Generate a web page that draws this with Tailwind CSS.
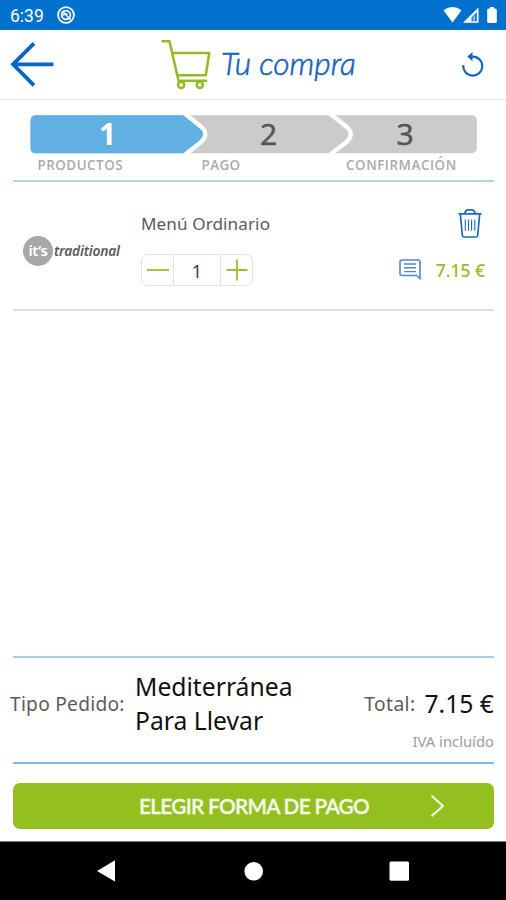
<!DOCTYPE html>
<html lang="es">
<head>
<meta charset="utf-8">
<title>Tu compra</title>
<script src="https://cdn.jsdelivr.net/npm/@tailwindcss/browser@4"></script>
</head>
<body class="bg-white">
<div class="w-[506px] h-[900px] flex flex-col overflow-hidden bg-white whitespace-nowrap font-['Noto_Sans',sans-serif]">
  <!-- Status bar -->
  <div class="h-[30px] shrink-0 bg-[#0072ce] flex items-center text-white pl-[10px] pr-[8px]">
    <span class="font-['Roboto',sans-serif] text-[17.5px] leading-[30px] w-[47px] pt-[2px]">6:39</span>
    <svg class="w-[18px] h-[18px]" viewBox="0 0 18 18" fill="none" stroke="white"><circle cx="9" cy="9" r="7.9" stroke-width="1.8"/><circle cx="9" cy="9" r="4.4" stroke-width="1.7"/><path d="M5 5L13.5 13.5M5.8 9.5Q8 7 10.5 8.2" stroke-width="1.6"/></svg>
    <svg class="ml-auto w-[56px] h-[20px]" viewBox="442 5 56 20" fill="white"><path d="M443.5 10.2Q452.5 3.6 461.5 10.2L452.5 22.5Z"/><path fill-rule="evenodd" d="M463 22.8L478.5 7.5V22.8ZM471.5 17.2V21.2H476.8V12.2Z"/><path d="M472.7 17.2L475.2 14.5V21.2H472.7Z" opacity=".5"/><path d="M488.8 8.5H490.3V7H494V8.5H495.2Q496.8 8.5 496.8 10V21.5Q496.8 23 495.2 23H488.8Q487.2 23 487.2 21.5V10Q487.2 8.5 488.8 8.5Z"/></svg>
  </div>
  <!-- Header -->
  <div class="h-[70px] shrink-0 border-b-[1.5px] border-[#dedede] flex items-center pl-[10px] pr-[21px]">
    <svg class="w-[45px] h-[46px] mt-[-2px]" viewBox="10.5 41 45 46" fill="none" stroke="#0867c4" stroke-width="3.8"><path d="M34.5 43.3L13.5 64.3L34.5 85.3M13.5 64.3H54"/></svg>
    <svg class="ml-[106px] mt-[-1px] w-[51px] h-[52px]" viewBox="161 38 51 52" fill="none" stroke="#93bb22" stroke-width="2.5" stroke-linecap="round" stroke-linejoin="round"><path d="M162.6 41.2H169.5L178.5 80.8H206.2M172.3 53H209.3L205.8 75.3H177.3"/><circle cx="181.2" cy="84.8" r="3.1"/><circle cx="199.8" cy="84.8" r="3.1"/></svg>
    <span class="ml-[9px] mt-[-4px] font-['Lato',sans-serif] italic font-light text-[31.7px] leading-[40px] text-[#1862bd] w-[137px] [-webkit-text-stroke:0.6px_#1862bd]">Tu compra</span>
    <svg class="ml-auto mt-[-2px] w-[24px] h-[26px]" viewBox="461 51 24 26" fill="none" stroke="#1464c0" stroke-width="2.1"><path d="M463.3 65.2A9.5 9.5 0 1 0 472.8 56.6H469"/><path d="M472.5 52V61.2L467.3 56.6Z" fill="#1464c0" stroke="none"/></svg>
  </div>
  <!-- Steps -->
  <div class="h-[80px] shrink-0 pt-[15px] pl-[30px]">
    <div class="grid w-[448px] h-[39px]">
      <svg class="col-start-1 row-start-1 w-[448px] h-[39px]" viewBox="30 115 448 39">
        <rect x="30.5" y="115.3" width="446.3" height="38" rx="5" fill="#cbcbcb"/>
        <path d="M36 115.3H182Q186 115.3 189 117.5L199 126Q209 134.3 199 142.8L189 151.3Q186 153.3 182 153.3H36Q30.5 153.3 30.5 148V121Q30.5 115.3 36 115.3Z" fill="#62afe3"/>
        <path d="M184 113L200.5 126.2Q210 134.3 200.5 142.5L184 155.5" fill="none" stroke="white" stroke-width="4.3"/>
        <path d="M329 113L346 126.2Q355.5 134.3 346 142.5L329 155.5" fill="none" stroke="white" stroke-width="4.3"/>
      </svg>
      <div class="col-start-1 row-start-1 flex font-['Open_Sans',sans-serif] text-[30px] leading-[38px] text-[#555] font-medium text-center">
        <span class="w-[155px] text-white font-bold">1</span><span class="w-[167px] [-webkit-text-stroke:0.6px_#555]">2</span><span class="w-[106px] [-webkit-text-stroke:0.6px_#555]">3</span>
      </div>
    </div>
    <div class="flex font-['Open_Sans',sans-serif] font-semibold text-[13.4px] leading-[23px] text-[#ababab] pl-[7.5px]">
      <span class="w-[164px] tracking-[0.5px]">PRODUCTOS</span><span class="w-[144.5px] tracking-[0.4px]">PAGO</span><span class="tracking-[0.55px]">CONFIRMACIÓN</span>
    </div>
  </div>
  <div class="mx-[13px] mr-[12px] h-[2px] shrink-0 bg-[#b0d0ec]"></div>
  <!-- Cart item -->
  <div class="ml-[13px] mr-[12px] h-[129px] shrink-0 border-b-2 border-[#dedede] flex pt-[24px] pl-[10px] pr-[9px]">
    <div class="w-[117px] h-[32px] mt-[29px] flex items-center">
      <div class="size-[30px] rounded-full bg-[#a8a8a8] text-white text-center text-[15px] leading-[28px] font-semibold tracking-[-0.4px]">it’s</div>
      <span class="ml-[1px] italic font-semibold text-[13.8px] tracking-[-0.2px] text-[#5c5c5c]">traditional</span>
    </div>
    <div class="flex flex-col pl-[1px]">
      <span class="text-[17.1px] leading-[36px] text-[#5a5a5a] tracking-[0.1px]">Menú Ordinario</span>
      <div class="mt-[12px] w-[112px] h-[32px] border-[1.5px] border-[#e2e2e2] rounded-[7px] flex">
        <div class="w-[31px] grid place-items-center"><svg class="w-[22px] h-[22px]" viewBox="0 0 22 22" stroke="#9dc02c" stroke-width="1.8"><path d="M0 11H22"/></svg></div>
        <div class="flex-1 border-x-[1.5px] border-[#e2e2e2] text-center text-[18px] leading-[32px] text-[#444]">1</div>
        <div class="w-[31px] grid place-items-center"><svg class="w-[22px] h-[22px]" viewBox="0 0 22 22" stroke="#9dc02c" stroke-width="1.8"><path d="M0.5 11H21.5M11 .5V21.5"/></svg></div>
      </div>
    </div>
    <div class="ml-auto flex flex-col items-end">
      <svg class="mr-[3px] mt-[2px] w-[24px] h-[30px]" viewBox="458 208 24 30" fill="none" stroke="#1c69bd" stroke-width="1.7"><path d="M458.5 213.8H481.5M460.3 214L462.3 235Q462.5 237 464.3 237H475.7Q477.5 237 477.7 235L479.7 214M464.7 213.5Q465.7 209.8 468 209.8H472Q474.3 209.8 475.3 213.5"/><path d="M465.3 219.5V230.8M468.5 219.5V230.8M471.6 219.5V230.8M474.8 219.5V230.8" stroke-width="1.1"/></svg>
      <div class="mt-[16px] flex items-center h-[32px]">
        <svg class="w-[22px] h-[22px]" viewBox="399 260 22 22" fill="none" stroke="#5386cd" stroke-width="1.6"><path d="M402 261H418Q420 261 420 263V279.5L416.5 276.5H402Q400 276.5 400 274.5V263Q400 261 402 261Z"/><path d="M404 265H416M404 268.8H416M404 272.6H416" stroke-width="1.4"/></svg>
        <span class="ml-[15px] text-[17.5px] font-medium text-[#9abb24] leading-[32px]">7.15 €</span>
      </div>
    </div>
  </div>
  <div class="flex-1"></div>
  <!-- Order summary -->
  <div class="ml-[13px] mr-[12px] h-[108px] shrink-0 border-t-2 border-b-2 border-t-[#a4ceec] border-b-[#83bbe5] flex">
    <span class="ml-[-3px] mt-[31px] w-[125px] text-[19.2px] leading-[30px] tracking-[0.25px] text-[#5c5c5c]">Tipo Pedido:</span>
    <div class="mt-[12px] text-[24.7px] leading-[34px] text-[#111]">Mediterránea<br>Para Llevar</div>
    <div class="ml-auto mt-[29px] flex flex-col items-end">
      <div class="flex leading-[34px]"><span class="text-[19.2px] leading-[33px] tracking-[0.4px] text-[#5c5c5c] mr-[9px]">Total:</span><span class="text-[24.7px] text-[#111]">7.15 €</span></div>
      <span class="text-[14.8px] leading-[20px] mt-[10px] text-[#9c9c9c]">IVA incluído</span>
    </div>
  </div>
  <div class="mt-[19px] mb-[12px] ml-[13px] mr-[12px] h-[46px] shrink-0 bg-[#93c01f] rounded-[7px] flex items-center pl-[126px] pr-[50px]">
    <span class="font-['Lato',sans-serif] font-semibold text-[20.8px] tracking-[-0.7px] text-[#f6fae9] [-webkit-text-stroke:0.3px_#f6fae9]">ELEGIR FORMA DE PAGO</span>
    <svg class="ml-auto w-[14px] h-[22px]" viewBox="0 0 14 22" fill="none" stroke="#f4f9e4" stroke-width="2"><path d="M1.5 .8L13 11L1.5 21.2"/></svg>
  </div>
  <!-- Navigation bar -->
  <div class="h-[59px] shrink-0 bg-black border-t border-[#777] pt-[18px] pl-[96px]">
    <svg class="w-[314px] h-[22px]" viewBox="96 860 314 22" fill="white"><path d="M97 871L115 860.3V881.5Z"/><circle cx="253.7" cy="871.3" r="9.3"/><rect x="389.5" y="861.5" width="19.5" height="19.3" rx="1.5"/></svg>
  </div>
</div>
</body>
</html>
